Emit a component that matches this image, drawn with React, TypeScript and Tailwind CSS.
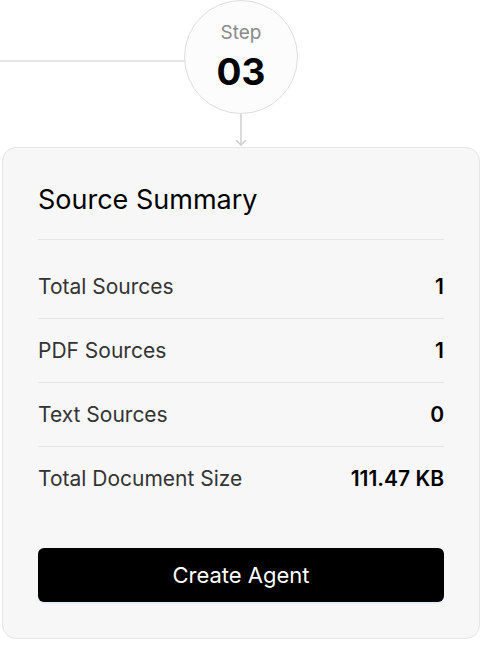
import React from "react";

const ROWS = [
  { label: "Total Sources", value: "1" },
  { label: "PDF Sources", value: "1" },
  { label: "Text Sources", value: "0" },
  { label: "Total Document Size", value: "111.47 KB" },
];

function StepHeader() {
  return (
    <div className="relative flex h-[147px] flex-col items-center">
      {/* connector line from the previous step */}
      <div className="absolute left-[-2px] top-[60px] h-[2px] w-[188px] bg-[#e5e5e5]" />
      <div className="relative z-10 ml-[-6px] flex h-[114px] w-[114px] flex-col items-center rounded-full border border-[#dedede] bg-[#fcfcfc] pt-[20px]">
        <span className="text-[19px] leading-6 text-[#8a8a8a]">Step</span>
        <span className="mt-[7px] text-[37px] font-bold leading-[40px] text-black">03</span>
      </div>
      <svg
        className="ml-[-6px]"
        width="14"
        height="33"
        viewBox="0 0 14 33"
        fill="none"
        stroke="#cfcfcf"
        strokeWidth="1.5"
        strokeLinecap="round"
        strokeLinejoin="round"
      >
        <path d="M7 0 V31" />
        <path d="M2.5 26.5 L7 31 L11.5 26.5" />
      </svg>
    </div>
  );
}

export default function App() {
  return (
    <div
      className="min-h-[650px] bg-white px-[2px]"
      style={{ fontFamily: "Inter, 'Noto Sans', sans-serif" }}
    >
      <StepHeader />

      <div className="mr-[6px] rounded-[14px] border border-[#e6e6e6] bg-[#f7f7f7] px-[35px] py-9">
        <div className="border-b border-[#e5e5e5] pb-[23px]">
          <h2 className="text-[27px] leading-8 text-black">Source Summary</h2>
        </div>

        <div className="mt-[15px]">
          {ROWS.map((row, i) => (
            <div
              key={row.label}
              className={
                "flex h-16 items-center justify-between " +
                (i < ROWS.length - 1 ? "border-b border-[#e5e5e5]" : "")
              }
            >
              <span className="text-[21px] text-[#333333]">{row.label}</span>
              <span className="text-[21px] font-semibold text-black">{row.value}</span>
            </div>
          ))}
        </div>

        <button className="mt-[37px] flex h-[54px] w-full items-center justify-center rounded-[6px] bg-black text-[22px] text-white shadow-[0_2px_0_#e3eef9]">
          Create Agent
        </button>
      </div>
    </div>
  );
}
